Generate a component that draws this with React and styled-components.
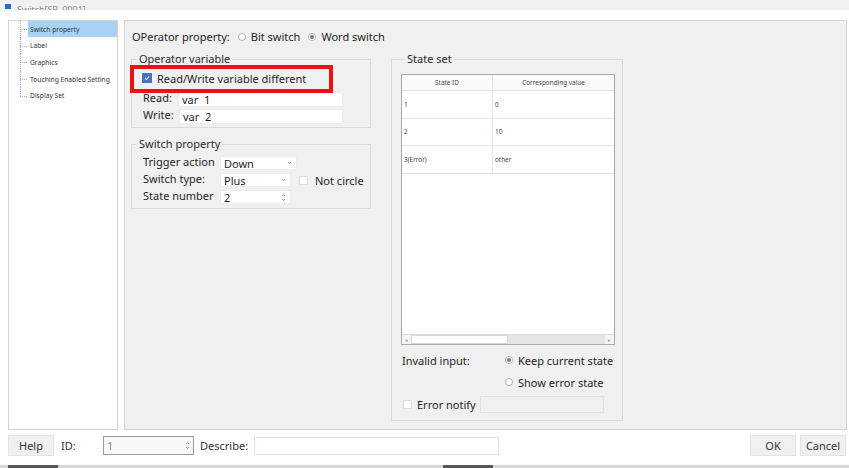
import React from "react";
import styled, { createGlobalStyle } from "styled-components";

const GlobalStyle = createGlobalStyle`
  html, body {
    margin: 0;
    padding: 0;
    background: #ffffff;
    overflow: hidden;
  }
  body {
    font-family: "Noto Sans", "Liberation Sans", sans-serif;
    color: #1f1f1f;
  }
  * {
    box-sizing: border-box;
  }
`;

const Window = styled.div`
  width: 849px;
  height: 468px;
  display: flex;
  flex-direction: column;
  background: #ffffff;
`;

const TitleBar = styled.div`
  height: 10px;
  background: #f1f1f1;
  display: flex;
  align-items: flex-end;
  gap: 6px;
  padding-left: 5px;
  overflow: hidden;
`;

const TitleIcon = styled.span`
  width: 6px;
  height: 5px;
  margin-bottom: 1px;
  background: #2b6cc4;
`;

const TitleText = styled.span`
  font-size: 9px;
  line-height: 9px;
  color: #8a8a8a;
  margin-bottom: -4px;
`;

const Body = styled.div`
  margin-top: 10px;
  height: 410px;
  display: flex;
  gap: 6px;
  padding: 0 2px 0 8px;
`;

const TreePanel = styled.div`
  width: 110px;
  border: 1px solid #d4d4d4;
  background: #ffffff;
  padding: 0 0 0 11px;
`;

const TreeItem = styled.div`
  position: relative;
  height: 16.6px;
  display: flex;
  align-items: center;
  padding-left: 8px;

  &::before {
    content: "";
    position: absolute;
    left: 0;
    top: 50%;
    width: 7px;
    border-top: 1px dotted #a8a8a8;
  }

  &::after {
    content: "";
    position: absolute;
    left: 0;
    top: 0;
    height: ${({ $last }) => ($last ? "50%" : "100%")};
    border-left: 1px dotted #a8a8a8;
  }
`;

const TreeLabel = styled.span`
  flex: 1;
  height: 16px;
  display: flex;
  align-items: center;
  padding-left: 2px;
  font-size: 6.7px;
  color: #333333;
  white-space: nowrap;
  background: ${({ $selected }) => ($selected ? "#a9d1f3" : "transparent")};
`;

const MainPanel = styled.div`
  flex: 1;
  background: #f0f0f0;
  border: 1px solid #d4d4d4;
  padding-left: 6px;
  display: flex;
  flex-direction: column;
`;

const HeaderRow = styled.div`
  height: 31px;
  display: flex;
  align-items: center;
  font-size: 11px;
  padding-left: 1px;
`;

const HeaderLabel = styled.span`
  margin-right: 8px;
`;

const RadioOption = styled.label`
  display: inline-flex;
  align-items: center;
  gap: 5px;
  margin-right: ${({ $gap }) => $gap || 0}px;
  font-size: 11px;
  white-space: nowrap;
`;

const RadioDot = styled.span`
  width: 8px;
  height: 8px;
  border-radius: 50%;
  border: 1px solid #b4b4b4;
  background: #ffffff;
  display: inline-flex;
  align-items: center;
  justify-content: center;

  &::after {
    content: "";
    width: 4px;
    height: 4px;
    border-radius: 50%;
    background: ${({ $checked }) => ($checked ? "#7a7a7a" : "transparent")};
  }
`;

const Columns = styled.div`
  display: flex;
  gap: 20px;
  align-items: flex-start;
`;

const LeftColumn = styled.div`
  width: 240px;
  display: flex;
  flex-direction: column;
  gap: 9px;
`;

const Group = styled.fieldset`
  margin: 0;
  min-width: 0;
  border: 1px solid #dadada;
  padding: ${({ $pad }) => $pad || "0"};
  display: flex;
  flex-direction: column;
  gap: ${({ $gap }) => $gap || 0}px;
`;

const Legend = styled.legend`
  font-size: 11px;
  line-height: 14px;
  padding: 0 2px;
  margin-left: ${({ $left }) => $left || 5}px;
  color: #2a2a2a;
`;

const CheckRow = styled.div`
  position: relative;
  height: 24px;
  display: flex;
  align-items: center;
  padding-left: 10px;
  gap: 5px;
  font-size: 11px;
`;

const Highlight = styled.div`
  position: absolute;
  left: -2px;
  top: -1px;
  width: 203px;
  height: 28px;
  border: 4px solid #ee1111;
  pointer-events: none;
`;

const CheckBox = styled.span`
  width: ${({ $size }) => $size || 10}px;
  height: ${({ $size }) => $size || 10}px;
  flex: none;
  display: inline-flex;
  align-items: center;
  justify-content: center;
  background: ${({ $checked }) => ($checked ? "#4476bd" : "#ffffff")};
  border: 1px solid ${({ $checked }) => ($checked ? "#4476bd" : "#dcdcdc")};
  margin-left: ${({ $ml }) => $ml || 0}px;
`;

const FieldRow = styled.div`
  height: ${({ $h }) => $h || 16}px;
  display: flex;
  align-items: center;
  padding-left: 11px;
  font-size: 11px;
`;

const FieldLabel = styled.span`
  width: ${({ $w }) => $w}px;
  flex: none;
  margin-top: -3px;
  white-space: nowrap;
`;

const TextBox = styled.div`
  width: ${({ $w }) => $w}px;
  height: ${({ $h }) => $h || 15}px;
  flex: none;
  background: ${({ $bg }) => $bg || "#ffffff"};
  border: 1px solid ${({ $border }) => $border || "#ececec"};
  display: flex;
  align-items: center;
  justify-content: space-between;
  padding: 0 3px;
  font-size: 11px;
  white-space: pre;
  margin-left: ${({ $ml }) => $ml || 0}px;
`;

const DropBox = styled.div`
  width: ${({ $w }) => $w}px;
  height: 14px;
  background: #ffffff;
  border: 1px solid #ececec;
  display: flex;
  align-items: center;
  justify-content: space-between;
  padding: 0 4px 0 3px;
  font-size: 11px;
`;

const SideText = styled.span`
  margin-left: ${({ $ml }) => $ml || 7}px;
  width: ${({ $w }) => ($w ? `${$w}px` : "auto")};
  font-size: 11px;
  white-space: nowrap;
`;

const RightColumn = styled.div`
  width: 232px;
`;

const Table = styled.div`
  margin-top: 8px;
  width: 214px;
  height: 271px;
  border: 1px solid #a9a9a9;
  background: #ffffff;
  display: flex;
  flex-direction: column;
`;

const TableRow = styled.div`
  display: grid;
  grid-template-columns: 91px 1fr;
  height: ${({ $h }) => $h}px;
  background: ${({ $head }) => ($head ? "#fafafa" : "#ffffff")};
  border-bottom: 1px solid #e4e4e4;
  font-size: 6.4px;
  color: #444444;
`;

const Cell = styled.div`
  display: flex;
  align-items: center;
  justify-content: ${({ $center }) => ($center ? "center" : "flex-start")};
  padding-left: ${({ $center }) => ($center ? 0 : 2)}px;
  border-right: ${({ $first }) => ($first ? "1px solid #e4e4e4" : "none")};
  white-space: nowrap;
`;

const TableFill = styled.div`
  flex: 1;
`;

const HScroll = styled.div`
  height: 10px;
  display: flex;
  align-items: stretch;
  background: #e6e6e6;
  border-top: 1px solid #dddddd;
`;

const ScrollArrow = styled.span`
  width: 9px;
  display: flex;
  align-items: center;
  justify-content: center;
  background: #f4f4f4;
  color: #9a9a9a;
  font-size: 5px;
`;

const ScrollThumb = styled.span`
  width: 97px;
  background: #ffffff;
  border: 1px solid #d8d8d8;
`;

const OptionGrid = styled.div`
  display: grid;
  grid-template-columns: 103px 1fr;
  grid-auto-rows: 22px;
  margin-top: 4px;
  padding-left: 1px;
  font-size: 11px;
  align-items: center;
`;

const NotifyRow = styled.div`
  height: 22px;
  display: flex;
  align-items: center;
  padding-left: 2px;
  font-size: 11px;
`;

const Footer = styled.div`
  height: 31px;
  display: flex;
  align-items: center;
  padding: 0 3px 0 8px;
  font-size: 11px;
`;

const Button = styled.div`
  width: 46px;
  height: 21px;
  display: flex;
  align-items: center;
  justify-content: center;
  background: #f0f0f0;
  border: 1px solid #e4e4e4;
  font-size: 11px;
  color: #333333;
  margin-left: ${({ $ml }) => $ml || 0}px;
`;

const FooterLabel = styled.span`
  margin-left: ${({ $ml }) => $ml}px;
  width: ${({ $w }) => ($w ? `${$w}px` : "auto")};
  color: #333333;
`;

const Spacer = styled.div`
  flex: 1;
`;

const Taskbar = styled.div`
  margin-top: auto;
  height: 3px;
  background: #d6d6d6;
  display: flex;
`;

const TaskSegment = styled.span`
  width: 50px;
  margin-left: ${({ $ml }) => $ml}px;
  background: #555555;
`;

function Chevron() {
  return (
    <svg width="5" height="4" viewBox="0 0 5 4">
      <path d="M1 1.2 L2.5 2.6 L4 1.2" stroke="#777" strokeWidth="0.8" fill="none" />
    </svg>
  );
}

function SpinArrows() {
  return (
    <svg width="5" height="9" viewBox="0 0 5 9">
      <path d="M1 3 L2.5 1.6 L4 3" stroke="#777" strokeWidth="0.8" fill="none" />
      <path d="M1 6 L2.5 7.4 L4 6" stroke="#777" strokeWidth="0.8" fill="none" />
    </svg>
  );
}

function Tick() {
  return (
    <svg width="8" height="8" viewBox="0 0 8 8">
      <path d="M2 4.2 L3.4 5.5 L6 2.6" stroke="#fff" strokeWidth="1.1" fill="none" />
    </svg>
  );
}

const treeItems = [
  "Switch property",
  "Label",
  "Graphics",
  "Touching Enabled Setting",
  "Display Set",
];

const states = [
  ["1", "0"],
  ["2", "10"],
  ["3(Error)", "other"],
];

export default function App() {
  return (
    <>
      <GlobalStyle />
      <Window>
        <TitleBar>
          <TitleIcon />
          <TitleText>Switch[SB_0001]</TitleText>
        </TitleBar>

        <Body>
          <TreePanel>
            {treeItems.map((item, i) => (
              <TreeItem key={item} $last={i === treeItems.length - 1}>
                <TreeLabel $selected={i === 0}>{item}</TreeLabel>
              </TreeItem>
            ))}
          </TreePanel>

          <MainPanel>
            <HeaderRow>
              <HeaderLabel>OPerator property:</HeaderLabel>
              <RadioOption $gap={8}>
                <RadioDot />
                Bit switch
              </RadioOption>
              <RadioOption>
                <RadioDot $checked />
                Word switch
              </RadioOption>
            </HeaderRow>

            <Columns>
              <LeftColumn>
                <Group $pad="0 0 3px 0" $gap={1}>
                  <Legend>Operator variable</Legend>
                  <CheckRow>
                    <CheckBox $checked>
                      <Tick />
                    </CheckBox>
                    Read/Write variable different
                    <Highlight />
                  </CheckRow>
                  <FieldRow>
                    <FieldLabel $w={35}>Read:</FieldLabel>
                    <TextBox $w={165}>var  1</TextBox>
                  </FieldRow>
                  <FieldRow>
                    <FieldLabel $w={36}>Write:</FieldLabel>
                    <TextBox $w={164}>var  2</TextBox>
                  </FieldRow>
                </Group>

                <Group $pad="4px 0 3px 0" $gap={1}>
                  <Legend>Switch property</Legend>
                  <FieldRow>
                    <FieldLabel $w={77}>Trigger action</FieldLabel>
                    <DropBox $w={77}>
                      Down
                      <Chevron />
                    </DropBox>
                  </FieldRow>
                  <FieldRow>
                    <FieldLabel $w={77}>Switch type:</FieldLabel>
                    <DropBox $w={71}>
                      Plus
                      <Chevron />
                    </DropBox>
                    <CheckBox $size={9} $ml={8} />
                    <SideText>Not circle</SideText>
                  </FieldRow>
                  <FieldRow>
                    <FieldLabel $w={77}>State number</FieldLabel>
                    <DropBox $w={71}>
                      2
                      <SpinArrows />
                    </DropBox>
                  </FieldRow>
                </Group>
              </LeftColumn>

              <RightColumn>
                <Group $pad="0 0 5px 9px">
                  <Legend $left={4}>State set</Legend>
                  <Table>
                    <TableRow $head $h={16}>
                      <Cell $first $center>State ID</Cell>
                      <Cell $center>Corresponding value</Cell>
                    </TableRow>
                    {states.map(([id, value]) => (
                      <TableRow key={id} $h={27.6}>
                        <Cell $first>{id}</Cell>
                        <Cell>{value}</Cell>
                      </TableRow>
                    ))}
                    <TableFill />
                    <HScroll>
                      <ScrollArrow>◂</ScrollArrow>
                      <ScrollThumb />
                      <Spacer />
                      <ScrollArrow>▸</ScrollArrow>
                    </HScroll>
                  </Table>

                  <OptionGrid>
                    <span>Invalid input:</span>
                    <RadioOption>
                      <RadioDot $checked />
                      Keep current state
                    </RadioOption>
                    <span />
                    <RadioOption>
                      <RadioDot />
                      Show error state
                    </RadioOption>
                  </OptionGrid>
                  <NotifyRow>
                    <CheckBox $size={9} />
                    <SideText $ml={5} $w={63}>Error notify</SideText>
                    <TextBox $w={124} $h={17} $border="#e2e2e2" $bg="#f0f0f0" />
                  </NotifyRow>
                </Group>
              </RightColumn>
            </Columns>
          </MainPanel>
        </Body>

        <Footer>
          <Button>Help</Button>
          <FooterLabel $ml={7} $w={42}>ID:</FooterLabel>
          <TextBox $w={91} $h={19} $border="#9a9a9a" $bg="#f8f8f8">
            <span style={{ color: "#888" }}>1</span>
            <SpinArrows />
          </TextBox>
          <FooterLabel $ml={6} $w={54}>Describe:</FooterLabel>
          <TextBox $w={245} $h={18} $border="#e2e2e2" />
          <Spacer />
          <Button>OK</Button>
          <Button $ml={4}>Cancel</Button>
        </Footer>

        <Taskbar>
          <TaskSegment $ml={8} />
          <TaskSegment $ml={385} />
        </Taskbar>
      </Window>
    </>
  );
}
